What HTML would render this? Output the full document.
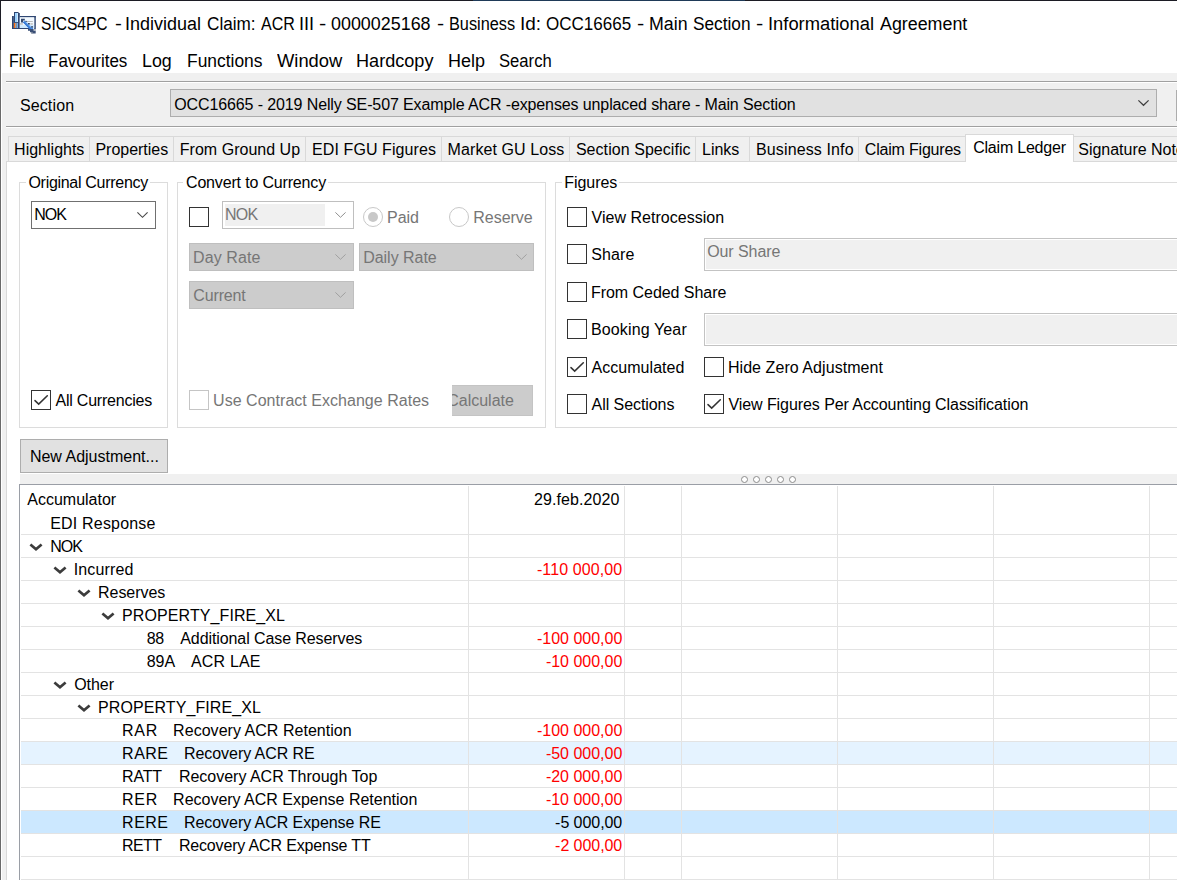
<!DOCTYPE html>
<html><head><meta charset="utf-8"><title>SICS4PC</title>
<style>
html,body{margin:0;padding:0;}
body{width:1177px;height:880px;overflow:hidden;position:relative;background:#fff;font-family:"Liberation Sans",sans-serif;font-size:16px;color:#000;}
.a{position:absolute;white-space:nowrap;}
.t{position:absolute;white-space:pre;line-height:20px;height:20px;}
.cb{position:absolute;width:18px;height:18px;border:1px solid #333;background:#fff;}
.dis{color:#767676;}
.dcombo{position:absolute;background:#ccc;border:1px solid #bfbfbf;box-sizing:border-box;}
.hl{position:absolute;left:21px;height:1px;right:0;background:#e3e3e3;}
.vl{position:absolute;top:486px;bottom:0;width:1px;background:#e3e3e3;}
.red{color:#ff0000;}
.tab{position:absolute;top:136px;height:25px;border-top:1px solid #d9d9d9;border-left:1px solid #d9d9d9;background:#f0f0f0;box-sizing:border-box;}
</style></head><body>
<div class="a" style="left:0;top:0;width:1177px;height:1px;background:#1c1c24"></div>
<div class="a" style="left:473px;top:0;width:272px;height:1px;background:#1f3a58"></div>
<div class="a" style="left:0;top:0;width:1px;height:50px;background:#1c1c24"></div>
<div class="a" style="left:0;top:73px;width:1177px;height:807px;background:#f0f0f0"></div>
<div class="a" style="left:0;top:50px;width:1px;height:830px;background:#6a6a6a"></div>
<div class="a" style="left:1px;top:73px;width:1px;height:807px;background:#fff"></div>
<svg class="a" style="left:12px;top:12px" width="24" height="22" viewBox="0 0 24 22">
<rect x="0" y="4" width="1" height="13" fill="#2f4672"/><rect x="1" y="4" width="1" height="13" fill="#4b6286"/>
<rect x="2" y="0" width="1" height="11" fill="#2f4672"/><rect x="2" y="0" width="4.6" height="1" fill="#2f4672"/>
<rect x="3" y="1" width="2" height="9" fill="#9bd2fe"/><rect x="5" y="1" width="1" height="9" fill="#d3ecff"/>
<rect x="6" y="1" width="1.8" height="16" fill="#2f4672"/><rect x="2" y="10" width="4" height="1" fill="#3b5480"/>
<rect x="1.9" y="11" width="1.3" height="5" fill="#fb6a0c"/><rect x="3.2" y="11" width="1.8" height="5" fill="#8a8f96"/><rect x="5" y="11" width="1" height="5" fill="#6fb0f5"/>
<rect x="0" y="16" width="18" height="1" fill="#2f4672"/>
<rect x="7.8" y="4" width="16" height="1.4" fill="#2f4672"/><rect x="22.2" y="4" width="1.6" height="13" fill="#2f4672"/>
<rect x="7.8" y="5.4" width="14.4" height="10.6" fill="#f2f9ff"/>
<rect x="8" y="13.2" width="14" height="2.8" fill="#cfeaff"/>
<rect x="14.8" y="9" width="6" height="0.8" fill="#a9a9a9"/><rect x="8" y="11.3" width="2.8" height="1.3" fill="#b5b5b5"/><rect x="18.4" y="11.3" width="2.4" height="1.3" fill="#b5b5b5"/>
<path d="M9 6.8 L12.8 6.8 L12.8 8.6 L11 8.6 L11 10.4 L9 10.4 Z" fill="#34496f"/>
<path d="M10.8 10.2 L13 8.4 L21.4 16.4 L19.2 18.8 Z" fill="#4a8fe3"/>
<path d="M13.2 9.3 L13.8 8.9 L20.6 15.4 L20 15.9 Z" fill="#cfe8ff"/><path d="M11 10.3 L11.7 9.8 L19.9 17.8 L19.3 18.5 Z" fill="#2f6fd0"/>
<rect x="13.4" y="8.9" width="1.5" height="1" fill="#34496f"/><rect x="16" y="11" width="1.8" height="1.5" fill="#34496f"/><rect x="19.3" y="14" width="1.5" height="1.8" fill="#34496f"/>
<path d="M16 16.9 L21.6 16.9 L21.6 18.7 L23.7 18.7 L23.7 21.6 L19.3 21.6 L19.3 20.2 L18 20.2 L18 18.7 L16 18.7 Z" fill="#3a4f76"/>
<rect x="19.3" y="20.2" width="1.4" height="1.4" fill="#9ba3ad"/><rect x="22.2" y="17" width="1.5" height="1.7" fill="#9ba3ad"/>
</svg>
<div class="t" style="left:41.40px;top:14px;transform-origin:0 0;transform:scaleX(0.8648);font-size:18px;">SICS4PC</div>
<div class="t" style="left:114.63px;top:14px;transform-origin:0 0;transform:scaleX(1.1444);font-size:18px;">-</div>
<div class="t" style="left:125.38px;top:14px;transform-origin:0 0;transform:scaleX(0.9980);font-size:18px;">Individual</div>
<div class="t" style="left:207.44px;top:14px;transform-origin:0 0;transform:scaleX(0.9524);font-size:18px;">Claim:</div>
<div class="t" style="left:260.85px;top:14px;transform-origin:0 0;transform:scaleX(0.8897);font-size:18px;">ACR</div>
<div class="t" style="left:298.86px;top:14px;transform-origin:0 0;transform:scaleX(1.0093);font-size:18px;">III</div>
<div class="t" style="left:318.98px;top:14px;transform-origin:0 0;transform:scaleX(1.2111);font-size:18px;">-</div>
<div class="t" style="left:331.17px;top:14px;transform-origin:0 0;transform:scaleX(0.9946);font-size:18px;">0000025168</div>
<div class="t" style="left:436.69px;top:14px;transform-origin:0 0;transform:scaleX(1.1889);font-size:18px;">-</div>
<div class="t" style="left:448.50px;top:14px;transform-origin:0 0;transform:scaleX(0.9055);font-size:18px;">Business</div>
<div class="t" style="left:519.50px;top:14px;transform-origin:0 0;transform:scaleX(1.0517);font-size:18px;">Id:</div>
<div class="t" style="left:545.63px;top:14px;transform-origin:0 0;transform:scaleX(0.9461);font-size:18px;">OCC16665</div>
<div class="t" style="left:636.78px;top:14px;transform-origin:0 0;transform:scaleX(1.2111);font-size:18px;">-</div>
<div class="t" style="left:648.78px;top:14px;transform-origin:0 0;transform:scaleX(0.9877);font-size:18px;">Main</div>
<div class="t" style="left:692.92px;top:14px;transform-origin:0 0;transform:scaleX(0.9580);font-size:18px;">Section</div>
<div class="t" style="left:756.08px;top:14px;transform-origin:0 0;transform:scaleX(1.2111);font-size:18px;">-</div>
<div class="t" style="left:767.65px;top:14px;transform-origin:0 0;transform:scaleX(1.0193);font-size:18px;">Informational</div>
<div class="t" style="left:879.65px;top:14px;transform-origin:0 0;transform:scaleX(0.9913);font-size:18px;">Agreement</div>
<div class="t" style="left:8.82px;top:51px;transform-origin:0 0;transform:scaleX(0.9128);font-size:17.5px;">File</div>
<div class="t" style="left:48.24px;top:51px;transform-origin:0 0;transform:scaleX(0.9710);font-size:17.5px;">Favourites</div>
<div class="t" style="left:141.97px;top:51px;transform-origin:0 0;transform:scaleX(1.0192);font-size:17.5px;">Log</div>
<div class="t" style="left:186.71px;top:51px;transform-origin:0 0;transform:scaleX(0.9953);font-size:17.5px;">Functions</div>
<div class="t" style="left:276.55px;top:51px;transform-origin:0 0;transform:scaleX(1.0490);font-size:17.5px;">Window</div>
<div class="t" style="left:356.15px;top:51px;transform-origin:0 0;transform:scaleX(1.0340);font-size:17.5px;">Hardcopy</div>
<div class="t" style="left:448.36px;top:51px;transform-origin:0 0;transform:scaleX(1.0277);font-size:17.5px;">Help</div>
<div class="t" style="left:499.25px;top:51px;transform-origin:0 0;transform:scaleX(0.9505);font-size:17.5px;">Search</div>
<div class="a" style="left:6px;top:81px;width:1171px;height:1px;background:#a0a0a0"></div>
<div class="a" style="left:6px;top:82px;width:1171px;height:1px;background:#fff"></div>
<div class="a" style="left:6px;top:126px;width:1171px;height:1px;background:#a0a0a0"></div>
<div class="a" style="left:6px;top:127px;width:1171px;height:1px;background:#fff"></div>
<div class="t" style="left:19.88px;top:96px;letter-spacing:0.137px;">Section</div>
<div class="a" style="left:170px;top:89px;width:987px;height:28px;box-sizing:border-box;border:1px solid #adadad;background:#e1e1e1"></div>
<div class="t" style="left:174.28px;top:95px;letter-spacing:-0.116px;">OCC16665 - 2019 Nelly SE-507 Example ACR -expenses unplaced share - Main Section</div>
<svg class="a" style="left:1137.7px;top:99.8px;overflow:visible" width="13" height="8"><path d="M0.4 0.4 L5.5 5.3 L10.6 0.4" fill="none" stroke="#404040" stroke-width="1.25"/></svg>
<div class="a" style="left:1176px;top:90px;width:1px;height:31px;background:#adadad"></div>
<div class="tab" style="left:8px;width:81px;"></div>
<div class="t" style="left:14.12px;top:140px;">Highlights</div>
<div class="tab" style="left:89px;width:84px;"></div>
<div class="t" style="left:95.42px;top:140px;letter-spacing:-0.013px;">Properties</div>
<div class="tab" style="left:173px;width:132px;"></div>
<div class="t" style="left:179.82px;top:140px;letter-spacing:0.017px;">From Ground Up</div>
<div class="tab" style="left:305px;width:136px;"></div>
<div class="t" style="left:312.02px;top:140px;letter-spacing:0.094px;">EDI FGU Figures</div>
<div class="tab" style="left:441px;width:128px;"></div>
<div class="t" style="left:447.62px;top:140px;letter-spacing:0.080px;">Market GU Loss</div>
<div class="tab" style="left:569px;width:126px;"></div>
<div class="t" style="left:575.88px;top:140px;letter-spacing:0.059px;">Section Specific</div>
<div class="tab" style="left:695px;width:54px;"></div>
<div class="t" style="left:702.02px;top:140px;letter-spacing:-0.030px;">Links</div>
<div class="tab" style="left:749px;width:109px;"></div>
<div class="t" style="left:756.02px;top:140px;letter-spacing:0.127px;">Business Info</div>
<div class="tab" style="left:858px;width:108px;"></div>
<div class="t" style="left:864.80px;top:140px;letter-spacing:-0.197px;">Claim Figures</div>
<div class="tab" style="left:1073px;width:127px;"></div>
<div class="t" style="left:1078.28px;top:140px;letter-spacing:-0.020px;">Signature Notes</div>
<div class="a" style="left:6px;top:161px;width:1171px;height:719px;background:#fff;border-left:1px solid #d9d9d9;border-top:1px solid #d9d9d9;box-sizing:border-box"></div>
<div class="a" style="left:965px;top:134px;width:109px;height:27px;background:#fff;border:1px solid #d9d9d9;border-bottom:none;box-sizing:border-box"></div>
<div class="a" style="left:966px;top:161px;width:107px;height:2px;background:#fff"></div>
<div class="t" style="left:973.20px;top:138px;letter-spacing:-0.215px;">Claim Ledger</div>
<div class="a" style="left:19px;top:182px;width:149px;height:246px;border:1px solid #dcdcdc;box-sizing:border-box"></div>
<div class="a" style="left:25.6px;top:182px;width:124.4px;height:1px;background:#fff"></div>
<div class="t" style="left:28.48px;top:173px;letter-spacing:-0.298px;">Original Currency</div>
<div class="a" style="left:177px;top:182px;width:369px;height:246px;border:1px solid #dcdcdc;box-sizing:border-box"></div>
<div class="a" style="left:183.2px;top:182px;width:144.8px;height:1px;background:#fff"></div>
<div class="t" style="left:186.00px;top:173px;letter-spacing:-0.167px;">Convert to Currency</div>
<div class="a" style="left:555px;top:182px;width:745px;height:246px;border:1px solid #dcdcdc;box-sizing:border-box"></div>
<div class="a" style="left:561.6px;top:182px;width:57.0px;height:1px;background:#fff"></div>
<div class="t" style="left:564.22px;top:173px;letter-spacing:-0.037px;">Figures</div>
<div class="a" style="left:31px;top:201px;width:125px;height:28px;box-sizing:border-box;border:1px solid #707070;background:#fff"></div>
<div class="t" style="left:34.22px;top:205px;letter-spacing:-1.040px;">NOK</div>
<svg class="a" style="left:136.9px;top:212.1px;overflow:visible" width="13" height="8"><path d="M0.4 0.4 L5.5 5.3 L10.6 0.4" fill="none" stroke="#484848" stroke-width="1.15"/></svg>
<div class="cb" style="left:31px;top:390px;border-color:#333"></div>
<svg class="a" style="left:31px;top:390px" width="20" height="20"><path d="M4 10.6 L7.7 14.1 L16.3 5.8" fill="none" stroke="#333" stroke-width="1.55" stroke-linecap="round"/></svg>
<div class="t" style="left:55.55px;top:391px;letter-spacing:-0.230px;">All Currencies</div>
<div class="cb" style="left:189px;top:207px;border-color:#333"></div>
<div class="a" style="left:222px;top:201px;width:132px;height:28px;box-sizing:border-box;border:1px solid #bfbfbf;background:#fff"></div>
<div class="a" style="left:225px;top:204px;width:100px;height:22px;background:#f0f0f0"></div>
<div class="t dis" style="left:225.02px;top:205px;letter-spacing:-0.790px;">NOK</div>
<svg class="a" style="left:334.9px;top:212.1px;overflow:visible" width="13" height="8"><path d="M0.4 0.4 L5.5 5.3 L10.6 0.4" fill="none" stroke="#909090" stroke-width="1.0"/></svg>
<div class="a" style="left:363px;top:207px;width:20px;height:20px;border:1px solid #c8c8c8;border-radius:50%;box-sizing:border-box;background:#fff"></div>
<div class="a" style="left:368px;top:212px;width:10px;height:10px;border-radius:50%;background:#c8c8c8"></div>
<div class="t dis" style="left:387.12px;top:208px;letter-spacing:-0.087px;">Paid</div>
<div class="a" style="left:449px;top:207px;width:20px;height:20px;border:1px solid #c8c8c8;border-radius:50%;box-sizing:border-box;background:#fff"></div>
<div class="t dis" style="left:473.22px;top:208px;letter-spacing:-0.013px;">Reserve</div>
<div class="dcombo" style="left:189px;top:243px;width:165px;height:28px;"></div>
<div class="t dis" style="left:193.12px;top:248px;letter-spacing:0.083px;">Day Rate</div>
<svg class="a" style="left:334.9px;top:254.1px;overflow:visible" width="13" height="8"><path d="M0.4 0.4 L5.5 5.3 L10.6 0.4" fill="none" stroke="#a0a0a0" stroke-width="1.0"/></svg>
<div class="dcombo" style="left:359px;top:243px;width:175px;height:28px;"></div>
<div class="t dis" style="left:363.22px;top:248px;letter-spacing:-0.038px;">Daily Rate</div>
<svg class="a" style="left:516.2px;top:254.1px;overflow:visible" width="13" height="8"><path d="M0.4 0.4 L5.5 5.3 L10.6 0.4" fill="none" stroke="#a0a0a0" stroke-width="1.0"/></svg>
<div class="dcombo" style="left:189px;top:281px;width:165px;height:28px;"></div>
<div class="t dis" style="left:193.30px;top:286px;letter-spacing:-0.147px;">Current</div>
<svg class="a" style="left:334.9px;top:292.1px;overflow:visible" width="13" height="8"><path d="M0.4 0.4 L5.5 5.3 L10.6 0.4" fill="none" stroke="#a0a0a0" stroke-width="1.0"/></svg>
<div class="cb" style="left:189px;top:390px;border-color:#c5c5c5"></div>
<div class="t dis" style="left:213.10px;top:391px;letter-spacing:0.029px;">Use Contract Exchange Rates</div>
<div class="a" style="left:452px;top:385px;width:81px;height:31px;background:#ccc;border:1px solid #c4c4c4;border-left:none;box-sizing:border-box;overflow:hidden"><div class="t dis" style="left:-4.8px;top:5px;">Calculate</div></div>
<div class="cb" style="left:567px;top:207px;border-color:#333"></div>
<div class="t" style="left:591.55px;top:208px;letter-spacing:0.022px;">View Retrocession</div>
<div class="cb" style="left:567px;top:244px;border-color:#333"></div>
<div class="t" style="left:591.28px;top:245px;letter-spacing:0.130px;">Share</div>
<div class="cb" style="left:567px;top:282px;border-color:#333"></div>
<div class="t" style="left:591.02px;top:283px;letter-spacing:-0.051px;">From Ceded Share</div>
<div class="cb" style="left:567px;top:319px;border-color:#333"></div>
<div class="t" style="left:591.02px;top:320px;letter-spacing:0.127px;">Booking Year</div>
<div class="cb" style="left:567px;top:357px;border-color:#333"></div>
<svg class="a" style="left:567px;top:357px" width="20" height="20"><path d="M4 10.6 L7.7 14.1 L16.3 5.8" fill="none" stroke="#333" stroke-width="1.55" stroke-linecap="round"/></svg>
<div class="t" style="left:591.55px;top:358px;letter-spacing:0.033px;">Accumulated</div>
<div class="cb" style="left:567px;top:394px;border-color:#333"></div>
<div class="t" style="left:591.55px;top:395px;letter-spacing:-0.063px;">All Sections</div>
<div class="a" style="left:704px;top:238px;width:600px;height:33px;box-sizing:border-box;border:1px solid #c3c3c3;background:#f0f0f0;box-shadow:inset 0 0 0 1px #fff"></div>
<div class="t dis" style="left:707.18px;top:242px;letter-spacing:-0.075px;">Our Share</div>
<div class="a" style="left:704px;top:313px;width:600px;height:33px;box-sizing:border-box;border:1px solid #c3c3c3;background:#f0f0f0;box-shadow:inset 0 0 0 1px #fff"></div>
<div class="cb" style="left:704px;top:357px;border-color:#333"></div>
<div class="t" style="left:727.92px;top:358px;letter-spacing:0.065px;">Hide Zero Adjustment</div>
<div class="cb" style="left:704px;top:394px;border-color:#333"></div>
<svg class="a" style="left:704px;top:394px" width="20" height="20"><path d="M4 10.6 L7.7 14.1 L16.3 5.8" fill="none" stroke="#333" stroke-width="1.55" stroke-linecap="round"/></svg>
<div class="t" style="left:728.45px;top:395px;letter-spacing:-0.072px;">View Figures Per Accounting Classification</div>
<div class="a" style="left:20px;top:439px;width:148px;height:34px;box-sizing:border-box;border:1px solid #adadad;background:#e1e1e1"></div>
<div class="t" style="left:29.92px;top:447px;">New Adjustment...</div>
<div class="a" style="left:20px;top:474px;width:1157px;height:10px;background:#f0f0f0"></div>
<div class="a" style="left:741px;top:476px;width:7px;height:7px;border:1px solid #8c8c8c;border-radius:50%;box-sizing:border-box;background:#fff"></div>
<div class="a" style="left:753px;top:476px;width:7px;height:7px;border:1px solid #8c8c8c;border-radius:50%;box-sizing:border-box;background:#fff"></div>
<div class="a" style="left:765px;top:476px;width:7px;height:7px;border:1px solid #8c8c8c;border-radius:50%;box-sizing:border-box;background:#fff"></div>
<div class="a" style="left:777px;top:476px;width:7px;height:7px;border:1px solid #8c8c8c;border-radius:50%;box-sizing:border-box;background:#fff"></div>
<div class="a" style="left:789px;top:476px;width:7px;height:7px;border:1px solid #8c8c8c;border-radius:50%;box-sizing:border-box;background:#fff"></div>
<div class="a" style="left:19px;top:484px;width:1158px;height:396px;box-sizing:border-box;border-left:1px solid #9a9ea6;border-top:1px solid #9a9ea6;background:#fff"></div>
<div class="a" style="left:21px;top:742px;width:1156px;height:22px;background:#e5f3ff"></div>
<div class="a" style="left:21px;top:811px;width:1156px;height:22px;background:#cce8ff"></div>
<div class="hl" style="top:534px"></div>
<div class="hl" style="top:557px"></div>
<div class="hl" style="top:580px"></div>
<div class="hl" style="top:603px"></div>
<div class="hl" style="top:626px"></div>
<div class="hl" style="top:649px"></div>
<div class="hl" style="top:672px"></div>
<div class="hl" style="top:695px"></div>
<div class="hl" style="top:718px"></div>
<div class="hl" style="top:741px"></div>
<div class="hl" style="top:764px"></div>
<div class="hl" style="top:787px"></div>
<div class="hl" style="top:810px"></div>
<div class="hl" style="top:833px"></div>
<div class="hl" style="top:856px"></div>
<div class="hl" style="top:879px"></div>
<div class="vl" style="left:468px"></div>
<div class="vl" style="left:624px"></div>
<div class="vl" style="left:681px"></div>
<div class="vl" style="left:837px"></div>
<div class="vl" style="left:993px"></div>
<div class="vl" style="left:1149px"></div>
<div class="t" style="left:27.35px;top:490px;letter-spacing:-0.017px;">Accumulator</div>
<div class="t" style="left:50.22px;top:514px;letter-spacing:0.182px;">EDI Response</div>
<div class="t" style="left:534.10px;top:490px;letter-spacing:0.068px;">29.feb.2020</div>
<div class="t" style="left:50.22px;top:537px;letter-spacing:-1.040px;">NOK</div>
<svg class="a" style="left:29px;top:543px" width="14" height="9"><path d="M1.4 1.5 L7 6.3 L12.6 1.5" fill="none" stroke="#3c3c3c" stroke-width="2.7"/></svg>
<div class="t" style="left:73.76px;top:560px;letter-spacing:0.137px;">Incurred</div>
<svg class="a" style="left:53px;top:566px" width="14" height="9"><path d="M1.4 1.5 L7 6.3 L12.6 1.5" fill="none" stroke="#3c3c3c" stroke-width="2.7"/></svg>
<div class="t red" style="left:536.91px;top:560px;letter-spacing:0.111px;">-110 000,00</div>
<div class="t" style="left:98.12px;top:583px;letter-spacing:-0.066px;">Reserves</div>
<svg class="a" style="left:77px;top:589px" width="14" height="9"><path d="M1.4 1.5 L7 6.3 L12.6 1.5" fill="none" stroke="#3c3c3c" stroke-width="2.7"/></svg>
<div class="t" style="left:122.12px;top:606px;letter-spacing:0.089px;">PROPERTY_FIRE_XL</div>
<svg class="a" style="left:101px;top:612px" width="14" height="9"><path d="M1.4 1.5 L7 6.3 L12.6 1.5" fill="none" stroke="#3c3c3c" stroke-width="2.7"/></svg>
<div class="t" style="left:146.66px;top:629px;letter-spacing:-0.280px;">88</div>
<div class="t" style="left:180.25px;top:629px;letter-spacing:-0.090px;">Additional Case Reserves</div>
<div class="t red" style="left:536.91px;top:629px;">-100 000,00</div>
<div class="t" style="left:146.66px;top:652px;letter-spacing:0.070px;">89A</div>
<div class="t" style="left:190.95px;top:652px;letter-spacing:0.182px;">ACR LAE</div>
<div class="t red" style="left:545.91px;top:652px;letter-spacing:-0.014px;">-10 000,00</div>
<div class="t" style="left:74.18px;top:675px;letter-spacing:-0.055px;">Other</div>
<svg class="a" style="left:53px;top:681px" width="14" height="9"><path d="M1.4 1.5 L7 6.3 L12.6 1.5" fill="none" stroke="#3c3c3c" stroke-width="2.7"/></svg>
<div class="t" style="left:98.12px;top:698px;letter-spacing:0.076px;">PROPERTY_FIRE_XL</div>
<svg class="a" style="left:77px;top:704px" width="14" height="9"><path d="M1.4 1.5 L7 6.3 L12.6 1.5" fill="none" stroke="#3c3c3c" stroke-width="2.7"/></svg>
<div class="t" style="left:122.12px;top:721px;letter-spacing:0.680px;">RAR</div>
<div class="t" style="left:173.12px;top:721px;letter-spacing:0.033px;">Recovery ACR Retention</div>
<div class="t red" style="left:536.91px;top:721px;">-100 000,00</div>
<div class="t" style="left:122.12px;top:744px;letter-spacing:0.473px;">RARE</div>
<div class="t" style="left:184.02px;top:744px;letter-spacing:-0.063px;">Recovery ACR RE</div>
<div class="t red" style="left:545.91px;top:744px;letter-spacing:-0.014px;">-50 000,00</div>
<div class="t" style="left:122.12px;top:767px;letter-spacing:-0.220px;">RATT</div>
<div class="t" style="left:178.92px;top:767px;letter-spacing:-0.010px;">Recovery ACR Through Top</div>
<div class="t red" style="left:545.91px;top:767px;letter-spacing:-0.014px;">-20 000,00</div>
<div class="t" style="left:122.12px;top:790px;letter-spacing:0.680px;">RER</div>
<div class="t" style="left:173.12px;top:790px;letter-spacing:-0.014px;">Recovery ACR Expense Retention</div>
<div class="t red" style="left:545.91px;top:790px;letter-spacing:-0.014px;">-10 000,00</div>
<div class="t" style="left:122.12px;top:813px;letter-spacing:0.473px;">RERE</div>
<div class="t" style="left:184.02px;top:813px;letter-spacing:-0.065px;">Recovery ACR Expense RE</div>
<div class="t" style="left:555.11px;top:813px;letter-spacing:-0.056px;">-5 000,00</div>
<div class="t" style="left:122.12px;top:836px;letter-spacing:-0.620px;">RETT</div>
<div class="t" style="left:178.92px;top:836px;letter-spacing:-0.162px;">Recovery ACR Expense TT</div>
<div class="t red" style="left:555.11px;top:836px;letter-spacing:-0.056px;">-2 000,00</div>
</body></html>
